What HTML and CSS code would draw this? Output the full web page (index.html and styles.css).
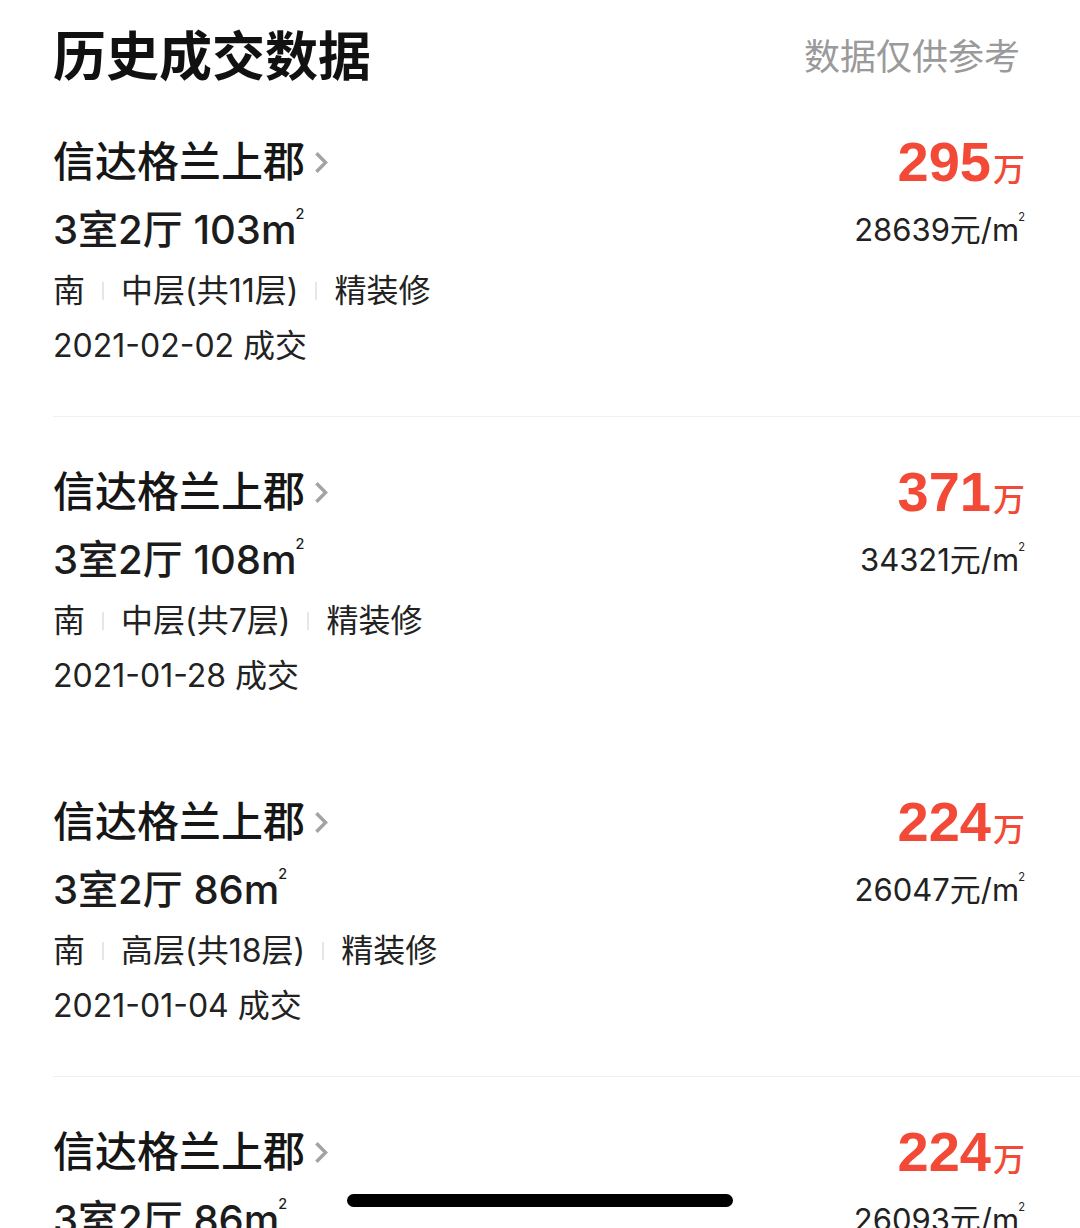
FILE: index.html
```html
<!DOCTYPE html>
<html lang="zh-CN">

<head>
	<meta charset="UTF-8">
	<meta name="viewport" content="width=device-width, initial-scale=1.0">
	<title>历史成交数据</title>
	<link rel="stylesheet" href="styles.css">
</head>

<body>
	<main class="page">
		<header class="head">
			<h1>历史成交数据</h1>
			<span class="note">数据仅供参考</span>
		</header>

		<section class="list">
			<article class="deal line">
				<div class="info">
					<div class="name">信达格兰上郡<svg class="arrow" viewBox="0 0 12 20"><path d="M2 2 L10 10 L2 18" /></svg></div>
					<div class="spec">3室2厅 103m<sup>2</sup></div>
					<div class="tags">南<i></i>中层(共11层)<i></i>精装修</div>
					<div class="date">2021-02-02 成交</div>
				</div>
				<div class="price">
					<div class="total">295<small>万</small></div>
					<div class="unit">28639元/m<sup>2</sup></div>
				</div>
			</article>

			<article class="deal">
				<div class="info">
					<div class="name">信达格兰上郡<svg class="arrow" viewBox="0 0 12 20"><path d="M2 2 L10 10 L2 18" /></svg></div>
					<div class="spec">3室2厅 108m<sup>2</sup></div>
					<div class="tags">南<i></i>中层(共7层)<i></i>精装修</div>
					<div class="date">2021-01-28 成交</div>
				</div>
				<div class="price">
					<div class="total">371<small>万</small></div>
					<div class="unit">34321元/m<sup>2</sup></div>
				</div>
			</article>

			<article class="deal line">
				<div class="info">
					<div class="name">信达格兰上郡<svg class="arrow" viewBox="0 0 12 20"><path d="M2 2 L10 10 L2 18" /></svg></div>
					<div class="spec">3室2厅 86m<sup>2</sup></div>
					<div class="tags">南<i></i>高层(共18层)<i></i>精装修</div>
					<div class="date">2021-01-04 成交</div>
				</div>
				<div class="price">
					<div class="total">224<small>万</small></div>
					<div class="unit">26047元/m<sup>2</sup></div>
				</div>
			</article>

			<article class="deal">
				<div class="info">
					<div class="name">信达格兰上郡<svg class="arrow" viewBox="0 0 12 20"><path d="M2 2 L10 10 L2 18" /></svg></div>
					<div class="spec">3室2厅 86m<sup>2</sup></div>
					<div class="tags">南<i></i>高层(共18层)<i></i>精装修</div>
					<div class="date">2021-01-04 成交</div>
				</div>
				<div class="price">
					<div class="total">224<small>万</small></div>
					<div class="unit">26093元/m<sup>2</sup></div>
				</div>
			</article>
		</section>
	</main>

	<div class="home-bar"></div>
</body>

</html>
```

FILE: styles.css
```css
* {
	margin: 0;
	padding: 0;
	box-sizing: border-box;
}

body {
	height: 1228px;
	overflow: hidden;
	background: #fff;
	color: #1c1c1c;
	font-family: Inter, "Noto Sans CJK SC", sans-serif;
}

.head {
	display: flex;
	justify-content: space-between;
	align-items: center;
	height: 87px;
	padding: 27px 60px 0 53px;
}

.head h1 {
	font-size: 53px;
	line-height: 60px;
	font-weight: 700;
	color: #111;
}

.note {
	font-size: 36px;
	line-height: 60px;
	color: #9a9a9a;
}

.list {
	margin-left: 53px;
}

.deal {
	display: flex;
	justify-content: space-between;
	height: 330px;
	padding: 45px 55px 0 0;
}

.deal.line {
	border-bottom: 1px solid #efefef;
}

.name {
	display: flex;
	align-items: center;
	font-size: 42px;
	line-height: 60px;
	font-weight: 500;
	color: #161616;
}

.arrow {
	width: 14px;
	height: 23px;
	margin-left: 9px;
	fill: none;
	stroke: #a3a3a3;
	stroke-width: 3;
}

.spec {
	font-size: 40px;
	line-height: 76px;
	font-weight: 500;
}

sup {
	font-size: 0.36em;
	line-height: 1;
	vertical-align: baseline;
	position: relative;
	top: -1.75em;
	margin-left: -1px;
}

.tags {
	display: flex;
	align-items: center;
	font-size: 32px;
	line-height: 46px;
	color: #222;
}

.tags i {
	display: inline-block;
	width: 2px;
	height: 18px;
	margin: 0 17px;
	background: #e6e6e6;
}

.date {
	font-size: 32px;
	line-height: 64px;
	color: #222;
}

.price {
	text-align: right;
}

.total {
	height: 60px;
	font-family: "Liberation Sans", "Noto Sans CJK SC", sans-serif;
	font-size: 56px;
	line-height: 60px;
	font-weight: 700;
	color: #f24a37;
}

.total small {
	font-size: 32px;
	line-height: 1;
	font-weight: 500;
	margin-left: 2px;
}

.unit {
	font-size: 31px;
	line-height: 76px;
	color: #222;
}

.home-bar {
	position: absolute;
	left: 347px;
	bottom: 21px;
	width: 386px;
	height: 13px;
	border-radius: 7px;
	background: #000;
}
```
